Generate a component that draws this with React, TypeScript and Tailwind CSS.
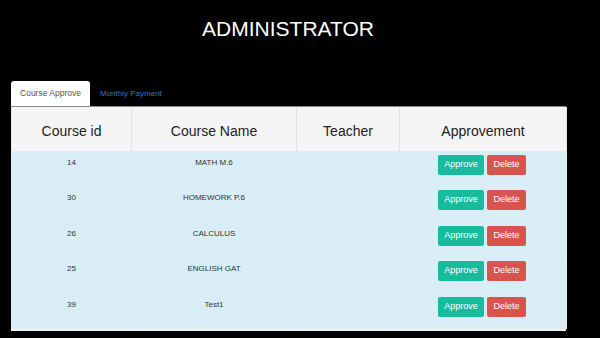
import React from "react";

const rows = [
  { id: "14", name: "MATH M.6" },
  { id: "30", name: "HOMEWORK P.6" },
  { id: "26", name: "CALCULUS" },
  { id: "25", name: "ENGLISH GAT" },
  { id: "39", name: "Test1" },
];

export default function App() {
  return (
    <div
      className="w-[600px] h-[338px] bg-black overflow-hidden"
      style={{ fontFamily: '"Liberation Sans", Arial, sans-serif' }}
    >
      <div className="h-[58px] pt-[16px] text-center text-white text-[21px] leading-[26px]">
        <span className="relative left-[-12px]">ADMINISTRATOR</span>
      </div>
      <div className="ml-[11px] w-[555px] mt-[24px]">
        <div className="flex items-end h-[25px] border-b border-[#8a8a8a]">
          <div className="h-[25px] w-[79px] bg-white rounded-t-[3px] flex items-center justify-center text-[8.5px] text-[#555]">
            Course Approve
          </div>
          <div className="h-[25px] ml-[10px] flex items-center text-[8px] text-[#337ab7]">
            Monthly Payment
          </div>
        </div>
        <table className="w-[555px] table-fixed border-collapse">
          <colgroup>
            <col className="w-[120px]" />
            <col className="w-[165px]" />
            <col className="w-[103px]" />
            <col className="w-[167px]" />
          </colgroup>
          <thead>
            <tr className="bg-[#f5f5f5] h-[44px]">
              {["Course id", "Course Name", "Teacher", "Approvement"].map((h) => (
                <th
                  key={h}
                  className="text-[14px] font-normal text-[#222] border-x border-[#e4e4e4] align-middle pt-[5px]"
                >
                  {h}
                </th>
              ))}
            </tr>
          </thead>
          <tbody>
            {rows.map((r) => (
              <tr key={r.id} className="bg-[#d9edf7] h-[35.5px]">
                <td className="text-center text-[8px] text-[#333] align-top pt-[5px] border border-[#e2ebef]">
                  {r.id}
                </td>
                <td className="text-center text-[8px] text-[#333] align-top pt-[5px] border border-[#e2ebef]">
                  {r.name}
                </td>
                <td className="border border-[#e2ebef]"></td>
                <td className="align-top pt-[3px] border border-[#e2ebef]">
                  <div className="flex justify-center gap-[3px] pr-[2px]">
                    <button className="h-[20px] w-[46px] bg-[#18bc9c] rounded-[2px] text-white text-[9px]">
                      Approve
                    </button>
                    <button className="h-[20px] w-[39px] bg-[#d9534f] rounded-[2px] text-white text-[9px]">
                      Delete
                    </button>
                  </div>
                </td>
              </tr>
            ))}
          </tbody>
        </table>
        <div className="h-[2px] bg-[#f0f0f0]"></div>
      </div>
    </div>
  );
}
